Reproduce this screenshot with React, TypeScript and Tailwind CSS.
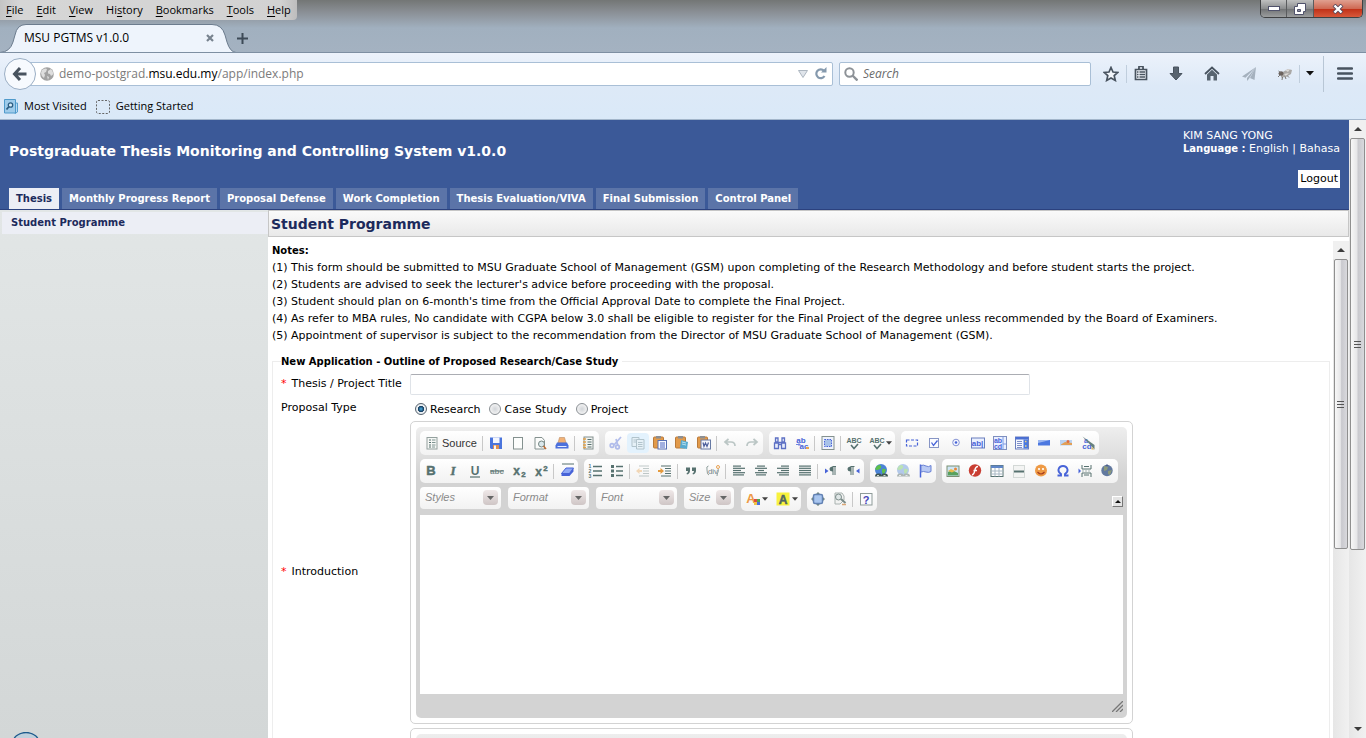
import React from "react";
import type { ReactNode } from "react";

const TEAL = "#56716f";
const BLUE = "#4763d8";

type IconName = string;

const textProps = {
  fontFamily: "Liberation Sans, Arial, sans-serif",
  fontWeight: 700,
  textAnchor: "middle" as const,
};

function bars(rows: [number, number][], color = TEAL) {
  return rows.map(([x, w], i) => (
    <rect key={i} x={x} y={2.5 + i * 2.2} width={w} height="1.2" fill={color} />
  ));
}

function Clipboard({ children }: { children: ReactNode }) {
  return (
    <g>
      <rect x="1.5" y="2" width="10" height="11" rx="1" fill="#e29a4a" stroke="#b97a3a" />
      <rect x="4" y="1" width="5" height="2.5" fill="#8c8f94" />
      {children}
    </g>
  );
}

const globe = (
  <g>
    <circle cx="8" cy="7" r="6" fill="#4b83d6" />
    <path d="M4 3q3-2 4 0t-1 3-3 1-2-1zM9 6q3-1 4 1l-2 4q-2 0-2-2z" fill="#5ec04b" />
    <path d="M2 13.5q0-3 3-3h1.500q2 0 2 2 0-2 2-2H12q3 0 3 3z" fill="#3f5652" />
    <path d="M4 12.500h2M10.500 12.500h2" stroke="#cfd8d6" />
  </g>
);

const icons: Record<IconName, ReactNode> = {
  source: (
    <g>
      <rect x="3" y="2.500" width="10" height="11.500" fill="#f5f7f5" stroke="#93a09e" />
      <path d="M5 5h2M5 7.500h2M5 10h2M5 12h2" stroke={TEAL} />
      <path d="M8 5h3.500M8 7.500h3.500M8 10h3.500M8 12h3" stroke="#7f9492" />
    </g>
  ),
  save: (
    <g>
      <path d="M2 2.500h12V14H3l-1-1z" fill="#4a74dc" />
      <rect x="5" y="2.500" width="6.500" height="5.500" fill="#f3f6ff" />
      <rect x="5" y="10" width="6" height="4" fill="#e0904d" />
      <rect x="6" y="10.500" width="2" height="3.500" fill="#f3f6ff" />
    </g>
  ),
  newpage: <rect x="3.500" y="2.500" width="9" height="11.500" fill="#fcfdfc" stroke="#84918f" />,
  preview: (
    <g>
      <path d="M3 2.500h7l2.500 3V14H3z" fill="#fbfcfb" stroke="#84918f" />
      <circle cx="9.500" cy="9" r="3" fill="#dbe8ec" stroke="#748582" />
      <path d="M11.500 11l2.500 3" stroke="#bf6b32" strokeWidth="1.500" />
    </g>
  ),
  print: (
    <g>
      <path d="M4 8l1.500-5.500h5L12 8z" fill="#f2b276" stroke="#b98b64" strokeWidth=".6" />
      <path d="M3 7.500h10l1.500 3v3h-13v-3z" fill="#4c70dc" />
      <path d="M3.500 11.500h9" stroke="#e6ecff" />
    </g>
  ),
  templates: (
    <g>
      <rect x="4" y="2" width="9" height="12" fill="#f1f3f1" stroke="#84918f" />
      <path d="M3 4h3M3 7h3M3 10h3M3 12.500h3" stroke="#e2a24b" strokeWidth="1.400" />
      <path d="M7.500 4.500h4M7.500 7h4M7.500 9.500h4M7.500 12h4" stroke={TEAL} />
    </g>
  ),
  cut: (
    <g opacity=".4" fill="none" stroke={BLUE} strokeWidth="1.700">
      <path d="M13 2L6 10M8 4l2 7" />
      <circle cx="4" cy="10.500" r="1.800" />
      <circle cx="9.500" cy="12" r="1.800" />
    </g>
  ),
  copy: (
    <g opacity=".5" fill="#e9f1f3" stroke="#83979c">
      <path d="M2 2.500h7v9H2z" />
      <path d="M6.500 4.500h7.500V14H6.500z" />
      <path d="M3.500 5h3M3.500 7h3M8 7.500h4.500M8 9.500h4.500M8 11.500h4.500" />
    </g>
  ),
  paste: (
    <Clipboard>
      <rect x="6" y="5.500" width="8.500" height="8.500" fill="#f7f9ff" stroke="#5871b5" />
      <path d="M8 8h5M8 10h5M8 12h5" stroke="#4c67c0" />
    </Clipboard>
  ),
  pastetext: (
    <Clipboard>
      <path d="M7 5l7 2-1 7-7-1z" fill="#58aad0" />
      <path d="M8 7l4 1M8 9l4 1" stroke="#b7e1ef" />
    </Clipboard>
  ),
  pasteword: (
    <Clipboard>
      <rect x="5" y="5" width="9.500" height="9" fill="#f5f7fc" stroke="#6679a3" />
      <path d="M7 7.500l1 4 1.500-3.500 1.500 3.500 1.500-4" fill="none" stroke="#4c5f9c" strokeWidth="1.200" />
    </Clipboard>
  ),
  undo: <path d="M6.500 4L3 7l3.500 3M3.500 7H9q4 0 4 4" fill="none" stroke="#bbc6c5" strokeWidth="1.700" />,
  redo: <path d="M9.500 4L13 7l-3.500 3M12.500 7H7q-4 0-4 4" fill="none" stroke="#bbc6c5" strokeWidth="1.700" />,
  find: (
    <g fill="#e6ebfa" stroke="#5d70c4" strokeWidth="1.300">
      <path d="M3.500 3H6v4H3.500zM10 3h2.500v4H10zM2.500 8H6.500v5.500H2.500zM9.500 8h4v5.500h-4z" />
      <path d="M6 7.500h4M6.500 9.500h3" />
    </g>
  ),
  replace: (
    <g {...textProps} fontSize="8">
      <text x="7" y="7.500" fill={BLUE}>ab</text>
      <text x="10" y="14" fill={BLUE}>ac</text>
      <path d="M2 9.500h4M4.500 8l1.500 1.500L4.500 11" fill="none" stroke="#7485df" />
      <rect x="12" y="12" width="3" height="2" fill="#e8a54d" />
    </g>
  ),
  selectall: (
    <g>
      <rect x="2" y="1.500" width="12" height="13" fill="#eef2fb" stroke="#84918f" />
      <rect x="4.500" y="4.500" width="7" height="7" fill="#a7c2e8" stroke={BLUE} strokeDasharray="1.500 1" />
    </g>
  ),
  spell: (
    <g>
      <text x="8" y="7.500" fontSize="7" fill={TEAL} {...textProps}>ABC</text>
      <path d="M5 10l3 3.500L12 9" fill="none" stroke={TEAL} strokeWidth="1.600" />
    </g>
  ),
  form: <rect x="2.500" y="5" width="11" height="6" fill="none" stroke={BLUE} strokeWidth="1.200" strokeDasharray="3 1.500" />,
  checkbox: (
    <g fill="none">
      <rect x="3.500" y="3.500" width="9" height="9" fill="#fbfcff" stroke="#8795c5" />
      <path d="M5.500 7.500l2 3 4-5" stroke={BLUE} strokeWidth="1.300" />
    </g>
  ),
  radio: (
    <g>
      <circle cx="8" cy="7.500" r="3.300" fill="#f6f8ff" stroke="#8795d5" />
      <circle cx="8" cy="7.500" r="1.300" fill={BLUE} />
    </g>
  ),
  textfield: (
    <g>
      <rect x="1.500" y="3" width="13" height="10" fill="#eaf0ff" stroke="#6b7fbe" />
      <text x="7.500" y="11" fontSize="8" fill={BLUE} {...textProps}>ab|</text>
    </g>
  ),
  textarea: (
    <g>
      <rect x="1.500" y="1.500" width="13" height="13" fill="#eaf0ff" stroke="#7e8fc0" />
      <g fontSize="7" fill={BLUE} {...textProps}>
        <text x="6" y="7.500">ab</text>
        <text x="6" y="13.500">cd</text>
      </g>
      <path d="M11 2v12M11 9h3" stroke="#7e9ae6" />
    </g>
  ),
  select: (
    <g>
      <rect x="1.500" y="2" width="13" height="12" fill="#f4f7ff" stroke="#6b7fbe" />
      <rect x="1.500" y="2" width="13" height="2.500" fill="#4b6fd2" />
      <path d="M3 6.500h5M3 8.500h5M3 10.500h5M3 12.500h5" stroke="#7e8ec6" />
      <rect x="9.500" y="4.500" width="4.500" height="9" fill="#4b79df" />
      <path d="M11 6.500h1.500M11 11h1.500" stroke="#f1d27d" strokeWidth="1.500" />
    </g>
  ),
  button: (
    <g>
      <rect x="2" y="5" width="12" height="5.500" fill="#4c78e0" />
      <path d="M2 5h12L2 8z" fill="#9db8f1" />
    </g>
  ),
  imagebutton: (
    <g>
      <rect x="2" y="5" width="12" height="5.500" fill="#bcd3f1" />
      <path d="M3 9.500l4-2.500 7 1v2H3z" fill="#e29f55" />
      <circle cx="10" cy="6.500" r="1.500" fill="#df6d3e" />
    </g>
  ),
  hidden: (
    <g>
      <text x="7" y="14" fontSize="8" fill={BLUE} {...textProps}>cd</text>
      <text x="6" y="7.500" fontSize="7" fill={BLUE} {...textProps}>a</text>
      <path d="M2.500 1.500L14.500 14.500V10z" fill="#66807e" />
      <path d="M11.500 11.500v3h3z" fill="#d8b065" />
    </g>
  ),
  bold: <text x="8" y="12" fontSize="13" fill={TEAL} stroke={TEAL} strokeWidth=".5" {...textProps}>B</text>,
  italic: (
    <text x="8" y="12" fontSize="13" fontStyle="italic" fill={TEAL} stroke={TEAL} strokeWidth=".4" {...textProps} fontFamily="Liberation Serif, serif">I</text>
  ),
  underline: (
    <g>
      <text x="8" y="11.500" fontSize="12" fill={TEAL} {...textProps}>U</text>
      <path d="M3 14h10" stroke={TEAL} strokeWidth="1.200" />
    </g>
  ),
  strike: (
    <g>
      <text x="8" y="10.500" fontSize="8" fill="#7b8e8c" {...textProps}>abc</text>
      <path d="M1 8h14" stroke={TEAL} />
    </g>
  ),
  sub: (
    <g fill={TEAL} stroke={TEAL} strokeWidth=".4" {...textProps}>
      <text x="5.500" y="11.500" fontSize="12">x</text>
      <text x="12.500" y="14" fontSize="8">2</text>
    </g>
  ),
  sup: (
    <g fill={TEAL} stroke={TEAL} strokeWidth=".4" {...textProps}>
      <text x="5.500" y="12.500" fontSize="12">x</text>
      <text x="12.500" y="8" fontSize="8">2</text>
    </g>
  ),
  eraser: (
    <g>
      <path d="M3 1h12" stroke={TEAL} />
      <path d="M7 5h7.500l-4 5.500H2.500z" fill="#8fa9f5" stroke={BLUE} />
      <path d="M2.500 10h8l4-5v3.500L10.500 13h-8z" fill={BLUE} />
    </g>
  ),
  ol: (
    <g>
      <g fontSize="5" fill={TEAL} {...textProps}>
        <text x="3" y="5">1</text>
        <text x="3" y="10">2</text>
        <text x="3" y="15">3</text>
      </g>
      <path d="M6 3.500h9M6 8h9M6 12.500h9" stroke={TEAL} strokeWidth="1.300" />
    </g>
  ),
  ul: (
    <g>
      <path d="M2 3.500h3M2 8h3M2 12.500h3" stroke={TEAL} strokeWidth="3" />
      <path d="M7 3.500h7M7 8h7M7 12.500h7" stroke={TEAL} strokeWidth="1.300" />
    </g>
  ),
  outdent: (
    <g opacity=".35">
      <path d="M4 3h10M8 5.500h6M8 8h6M8 10.500h6M4 13h10" stroke={TEAL} />
      <path d="M1 8l3.500-3v2H7v2H4.500v2z" fill="#e59a3c" />
    </g>
  ),
  indent: (
    <g>
      <path d="M4 3h10M8 5.500h6M8 8h6M8 10.500h6M4 13h10" stroke={TEAL} />
      <path d="M7 8L3.500 5v2H1v2h2.500v2z" fill="#e59a3c" />
    </g>
  ),
  quote: (
    <path d="M3 4.500h4v3q0 3-3 4l-.5-1Q5 9.500 5 8H3zM9 4.500h4v3q0 3-3 4l-.5-1Q11 9.500 11 8H9z" fill={TEAL} />
  ),
  div: (
    <g>
      <text x="8" y="11" fontSize="8" fill="#72858a" {...textProps} fontWeight={400}>div</text>
      <path d="M3.500 3Q1 3 2 7q0 5 2 5M13 6q1 1 0 3t-1 4" fill="none" stroke="#8f9f9d" />
      <circle cx="13" cy="4" r="1.500" fill="none" stroke="#eaa251" />
    </g>
  ),
  left: <g>{bars([[2, 8], [2, 12], [2, 8], [2, 12], [2, 11]])}</g>,
  center: <g>{bars([[4, 8], [2, 12], [5, 6], [2, 12], [3, 10]])}</g>,
  right: <g>{bars([[6, 8], [2, 12], [6, 8], [2, 12], [4, 10]])}</g>,
  justify: <g>{bars([[2, 12], [2, 12], [2, 12], [2, 12], [2, 12]])}</g>,
  ltr: (
    <g>
      <path d="M2 5.500v5l3.500-2.500z" fill={BLUE} />
      <path d="M9.500 3.500H13M10 4v8M12 4v8" fill="none" stroke={TEAL} />
      <path d="M10 3.500q-3.500 0-3.500 2.500T10 8.500z" fill={TEAL} />
    </g>
  ),
  rtl: (
    <g>
      <path d="M14.500 5.500v5L11 8z" fill={BLUE} />
      <path d="M5.500 3.500H9.500M6 4v8M8 4v8" fill="none" stroke={TEAL} />
      <path d="M6 3.500Q2.500 3.500 2.500 6T6 8.500z" fill={TEAL} />
    </g>
  ),
  link: globe,
  unlink: <g opacity=".4">{globe}</g>,
  anchor: (
    <g>
      <path d="M3.500 1.500v13" stroke={BLUE} strokeWidth="1.500" />
      <path d="M4 2.500q2.500-1 5 .5t5-.5v6q-2.500 1.500-5 .5t-5 0z" fill="#b8c9f3" stroke="#6a82d5" />
    </g>
  ),
  image: (
    <g>
      <rect x="2" y="3" width="12" height="10.500" fill="#cfe6f6" stroke="#7b8f72" />
      <path d="M3 12.500V9l4-2 6 3v2.500z" fill="#58a15e" />
      <path d="M3 8l3-2 4 2-3 1.500z" fill="#ecbc4c" />
      <circle cx="10.500" cy="6" r="1.500" fill="#e78739" />
    </g>
  ),
  flash: (
    <g>
      <circle cx="8" cy="7.500" r="6.200" fill="#c93e32" />
      <path d="M11 3.500q-2.500 0-3.200 4T5 12M6.500 7.500h3.500" fill="none" stroke="#fff" strokeWidth="1.400" />
    </g>
  ),
  table: (
    <g>
      <rect x="2" y="2.500" width="12" height="11" fill="#fff" stroke={TEAL} />
      <rect x="2" y="2.500" width="12" height="2.500" fill="#5f86c8" />
      <path d="M6 5v8.500M10 5v8.500M2 8h12M2 11h12" stroke="#a9b8c4" />
    </g>
  ),
  rule: (
    <g>
      <rect x="2.500" y="2.500" width="11" height="12" fill="#f3f4f3" stroke="#d3d8d6" />
      <path d="M3 8.500h10" stroke={TEAL} strokeWidth="2" />
    </g>
  ),
  smiley: (
    <g>
      <circle cx="8" cy="7.500" r="6" fill="#ee9a45" />
      <path d="M4.500 9q3.500 4 7 0" fill="none" stroke="#a83f20" strokeWidth="1.200" />
      <circle cx="6" cy="6" r="1.100" fill="#fff" />
      <circle cx="10" cy="6" r="1.100" fill="#fff" />
    </g>
  ),
  omega: (
    <path d="M2.500 12.500h3.500v-1.500Q3 9 3.500 6.500 4.500 3 8 3t4.500 3.500Q13 9 10 11v1.500h3.500" fill="none" stroke={BLUE} strokeWidth="1.900" />
  ),
  pagebreak: (
    <g fill="none">
      <path d="M5 2v4h9V2M5 14v-4h9v4M7 3.500h5M7 12h5" stroke={TEAL} />
      <path d="M5 8h9" stroke="#a7b5b3" strokeDasharray="2 1" />
      <path d="M1.500 5.500L4 8l-2.500 2.500z" fill={BLUE} />
    </g>
  ),
  iframe: (
    <g>
      <circle cx="8" cy="7.500" r="5.700" fill="#62799f" />
      <path d="M5 3l4 1-1 3-3 1zM9 8l4-1-2 5-2-1z" fill="#8d9a7a" />
      <path d="M8 1l1.500 2h-3z" fill="#4d5f8d" />
    </g>
  ),
  textcolor: (
    <g>
      <text x="6" y="12" fontSize="13" fill="#ee9a45" {...textProps}>A</text>
      <rect x="9" y="8" width="3" height="3" fill="#df4b3f" />
      <rect x="12" y="8" width="3" height="3" fill="#57a84f" />
      <rect x="9" y="11" width="3" height="3" fill="#f0c345" />
      <rect x="12" y="11" width="3" height="3" fill="#4b6fdc" />
    </g>
  ),
  bgcolor: (
    <g>
      <rect x="1.500" y="1.500" width="13" height="13" fill="#f8f23e" />
      <text x="8" y="12.500" fontSize="12" fill="#4f6664" stroke="#4f6664" strokeWidth=".5" {...textProps}>A</text>
    </g>
  ),
  maximize: (
    <g>
      <path d="M8 1l2.500 2.500h-5zM8 15l2.500-2.500h-5zM1 8l2.500-2.500v5zM15 8l-2.500-2.500v5z" fill="#6f8583" />
      <rect x="3.500" y="3.500" width="9" height="9" rx="1.500" fill="#a9c6ef" stroke="#6382b4" strokeWidth="1.500" />
    </g>
  ),
  blocks: (
    <g>
      <path d="M3 2h7l2 3v4l-4 4H3z" fill="#f1f2f1" stroke="#a9b2b0" />
      <circle cx="6.500" cy="6" r="3" fill="#dfe6e6" stroke="#7b8c8a" />
      <path d="M9 8l4.500 4" stroke="#7b8c8a" strokeWidth="2" />
      <path d="M10 13.500h4" stroke="#dba878" strokeWidth="1.500" />
    </g>
  ),
  about: (
    <g>
      <rect x="2.500" y="2.500" width="11.500" height="11.500" fill="#fafbfd" stroke="#8f9b99" />
      <text x="8.200" y="12.500" fontSize="11" fill="#4646b8" {...textProps}>?</text>
    </g>
  ),
};

function Tool({ name, arrow, active }: { name: IconName; arrow?: boolean; active?: boolean }) {
  return (
    <button
      type="button"
      aria-label={name}
      className={`flex h-5 items-center justify-center rounded-sm ${arrow ? "w-[30px]" : "w-[22px]"} ${active ? "bg-[#e3f2fd]" : ""}`}
    >
      <svg viewBox="0 0 16 16" className="size-4 shrink-0">{icons[name]}</svg>
      {arrow && (
        <svg viewBox="0 0 7 4" className="ml-px h-1 w-[6px]"><path d="M0 0h7L3.500 4z" fill="#444" /></svg>
      )}
    </button>
  );
}

function Group({ items }: { items: string[] }) {
  return (
    <div className="flex h-6 items-center rounded-[5px] bg-gradient-to-b from-white to-[#f2f2f2]">
      {items.map((it, i) => {
        if (it === "|") return <span key={i} className="mr-[2px] ml-px h-[15px] w-px bg-[#c8c8c8]" />;
        if (it === "source")
          return (
            <button key={i} type="button" className="flex h-5 w-[61px] items-center gap-[2px] pl-1 font-['Liberation_Sans',Arial,sans-serif] text-[11px] text-[#333]">
              <svg viewBox="0 0 16 16" className="size-4 shrink-0">{icons.source}</svg>
              Source
            </button>
          );
        const arrow = it.endsWith("+");
        return <Tool key={i} name={arrow ? it.slice(0, -1) : it} arrow={arrow} active={it === "copy"} />;
      })}
    </div>
  );
}

function Combo({ label, small }: { label: string; small?: boolean }) {
  return (
    <button
      type="button"
      className={`mr-px flex h-[22px] items-center justify-between rounded-[4px] bg-gradient-to-b from-white to-[#f2f2f2] pr-[3px] pb-px pl-[5px] font-['Liberation_Sans',Arial,sans-serif] text-[11px] text-[#8a8a8a] italic ${small ? "w-[50px]" : "w-[81px]"}`}
    >
      {label}
      <span className="flex size-[15px] items-center justify-center rounded-sm bg-gradient-to-b from-[#efe8e8] to-[#cfc6c6]">
        <svg viewBox="0 0 7 4" className="h-1 w-[7px]"><path d="M0 0h7L3.500 4z" fill="#666" /></svg>
      </span>
    </button>
  );
}

const row1 = [
  ["source", "|", "save", "newpage", "preview", "print", "|", "templates"],
  ["cut", "copy", "paste", "pastetext", "pasteword", "|", "undo", "redo"],
  ["find", "replace", "|", "selectall", "|", "spell", "spell+"],
  ["form", "checkbox", "radio", "textfield", "textarea", "select", "button", "imagebutton", "hidden"],
];
const row2 = [
  ["bold", "italic", "underline", "strike", "sub", "sup", "|", "eraser"],
  ["ol", "ul", "|", "outdent", "indent", "|", "quote", "div", "|", "left", "center", "right", "justify", "|", "ltr", "rtl"],
  ["link", "unlink", "anchor"],
  ["image", "flash", "table", "rule", "smiley", "omega", "pagebreak", "iframe"],
];

function Editor({ id }: { id: string }) {
  return (
    <div className="w-[723px] rounded-[5px] border border-[#d3d3d3] bg-white p-[5px]">
      <div className="rounded-[5px] bg-[linear-gradient(#eeeeee,#d3d3d3_50px)] px-1 pt-1">
        <div className="flex flex-col gap-1">
          <div className="flex gap-[6px]">{row1.map((g, i) => <Group key={i} items={g} />)}</div>
          <div className="flex gap-[6px]">{row2.map((g, i) => <Group key={i} items={g} />)}</div>
          <div className="flex gap-[6px]">
            <Combo label="Styles" />
            <Combo label="Format" />
            <Combo label="Font" />
            <Combo label="Size" small />
            <Group items={["textcolor+", "bgcolor+"]} />
            <Group items={["maximize", "blocks", "|", "about"]} />
            <button type="button" aria-label="Collapse toolbar" className="mb-1 ml-auto flex size-[11px] items-center justify-center self-end border border-white border-r-[#777] border-b-[#777] bg-[#e4e4e4]">
              <svg viewBox="0 0 6 3" className="h-[3px] w-[6px]"><path d="M0 3h6L3 0z" fill="#111" /></svg>
            </button>
          </div>
        </div>
        <textarea id={id} className="mt-1 block h-[179px] w-full resize-none bg-white p-2 outline-none" />
        <div className="flex h-6 items-center justify-end">
          <svg viewBox="0 0 11 11" className="size-[11px]">
            <path d="M0 11L11 0M4 11l7-7M8 11l3-3" stroke="#777" strokeWidth="1.300" />
          </svg>
        </div>
      </div>
    </div>
  );
}

function ScrollBar({ thumb, side, endArrow }: { thumb: string; side: string; endArrow?: boolean }) {
  return (
    <div aria-hidden="true" className={`flex shrink-0 flex-col bg-gradient-to-r from-[#e6e6e6] to-[#f1f1f1] ${side}`}>
      <div className="flex h-[18px] shrink-0 items-center justify-center bg-[#f0f0f0]">
        <svg viewBox="0 0 8 4" className="h-1 w-2"><path d="M0 4h8L4 0z" fill="#3c3c3c" /></svg>
      </div>
      <div className={`mr-px ml-px flex shrink-0 items-center justify-center rounded-[2px] border border-[#8f8f8f] bg-[linear-gradient(90deg,#f7f7f7,#e6e6e8_45%,#c9c9ce_55%,#d9d9dd)] ${thumb}`}>
        <svg viewBox="0 0 8 9" className="h-[9px] w-2">
          <path d="M0 1.500h7M0 4.500h7M0 7.500h7" stroke="#555" strokeWidth="1.200" />
        </svg>
      </div>
      {endArrow && (
        <div className="mt-auto flex h-[18px] shrink-0 items-center justify-center">
          <svg viewBox="0 0 8 4" className="h-1 w-2"><path d="M0 0h8L4 4z" fill="#3c3c3c" /></svg>
        </div>
      )}
    </div>
  );
}

const menus: [string, string, string][] = [
  ["", "F", "ile"], ["", "E", "dit"], ["", "V", "iew"], ["Hi", "s", "tory"], ["", "B", "ookmarks"], ["", "T", "ools"], ["", "H", "elp"],
];

function BrowserChrome() {
  return (
    <header className="shrink-0 font-['Open_Sans','Noto_Sans',sans-serif] text-xs text-black">
      <div className="flex h-[52px] flex-col bg-[linear-gradient(#737675,#8a8f95_12px,#a1b0bf_28px,#a4b2c1)]">
        <div className="flex h-5 items-start justify-between">
          <nav className="flex h-5 items-center gap-[13px] rounded-br bg-[linear-gradient(90deg,#c4c4c4,#d6d6d6_20px,#d2d2d2_280px,#bdbdbd)] pr-[6px] pl-[6px] text-[11px]">
            {menus.map(([a, b, c]) => (
              <button key={b + c} type="button">{a}<span className="underline underline-offset-2">{b}</span>{c}</button>
            ))}
          </nav>
          <div className="mr-[3px] flex h-[18px] overflow-hidden rounded-b-[5px] border border-t-0 border-[#3f4143]">
            <button type="button" aria-label="Minimize" className="flex w-[26px] items-center justify-center border-r border-[#5a5c5e] bg-[linear-gradient(#bfc0c0,#8c8e8f_50%,#6f7173_51%,#9b9d9e)]">
              <svg viewBox="0 0 12 6" className="h-[6px] w-3"><rect x=".5" y=".5" width="11" height="4" fill="#fff" stroke="#50526b" /></svg>
            </button>
            <button type="button" aria-label="Restore" className="flex w-[27px] items-center justify-center border-r border-[#5a5c5e] bg-[linear-gradient(#bfc0c0,#8c8e8f_50%,#6f7173_51%,#9b9d9e)]">
              <svg viewBox="0 0 12 12" className="size-3">
                <path d="M3.500.5h8v8h-2v3h-9v-8h3z" fill="#fff" stroke="#50526b" />
                <path d="M3.500 6.500h3v2h-3z" fill="#8b8da0" stroke="#50526b" />
              </svg>
            </button>
            <button type="button" aria-label="Close window" className="flex w-12 items-center justify-center bg-[linear-gradient(#e0a090,#cf6a54_50%,#bf2f16_51%,#d8583a)]">
              <svg viewBox="0 0 12 10" className="h-[10px] w-3">
                <path d="M2 1l8 8M10 1L2 9" stroke="#59485a" strokeWidth="4" />
                <path d="M2.500 1.500l7 7M9.500 1.500l-7 7" stroke="#fff" strokeWidth="2.400" />
              </svg>
            </button>
          </div>
        </div>
        <div className="mt-1 flex h-7 items-stretch">
          <div className="relative flex w-[236px] items-center pr-[22px] pl-6">
            <svg viewBox="0 0 236 28" className="absolute inset-0 h-7 w-full" aria-hidden="true">
              <path d="M0 28.500Q10 28 13 18L15 11Q17 .5 26 .5H212Q222 .5 225 11L227 18Q230 28 236 28.500z" fill="#eef4fc" stroke="#6c7c8e" />
            </svg>
            <span className="relative grow">MSU PGTMS v1.0.0</span>
            <button type="button" aria-label="Close tab" className="relative">
              <svg viewBox="0 0 8 8" className="size-2"><path d="M1 1l6 6M7 1L1 7" stroke="#77838f" strokeWidth="2.200" /></svg>
            </button>
          </div>
          <button type="button" aria-label="New tab" className="ml-px flex items-center">
            <svg viewBox="0 0 11 11" className="size-[11px]"><path d="M5.500 0v11M0 5.500h11" stroke="#3d4a57" strokeWidth="2" /></svg>
          </button>
        </div>
      </div>

      <div className="flex h-[68px] flex-col border-t border-b border-t-[#7e8fa2] border-b-[#a3b6cb] bg-gradient-to-b from-[#ecf2fb] via-[#dde9f7] via-50% to-[#dae9f8]">
        <div className="flex h-[41px] items-center">
          <button type="button" aria-label="Back" className="relative z-10 ml-1 flex size-8 shrink-0 items-center justify-center rounded-full border border-[#9aaec4] bg-[#f7fafe]">
            <svg viewBox="0 0 16 16" className="size-4"><path d="M8 2L2.500 8 8 14M3 8h11.500" fill="none" stroke="#48535f" strokeWidth="3" /></svg>
          </button>
          <div className="-ml-2 flex h-6 grow items-center rounded-r-[2px] border border-[#a9bfd6] bg-white pr-[5px] pl-[11px]">
            <svg viewBox="0 0 14 14" className="size-[14px]">
              <circle cx="7" cy="7" r="6.800" fill="#a2a2a2" />
              <path d="M2 3q3-2.500 5-1l-1 3-2 1 1 2-1 3Q1 9 1 6zM8 4l3-2q2 2 2.500 5L11 9l-1-2-2-.5zM7 9l2 1-1 3z" fill="#dedede" />
            </svg>
            <div role="textbox" aria-label="Address" className="ml-[5px] grow text-[#7b7b7b]">demo-postgrad.<span className="text-black">msu.edu.my</span>/app/index.php</div>
            <button type="button" aria-label="History list" className="mr-[6px]">
              <svg viewBox="0 0 10 8" className="h-2 w-[10px]"><path d="M.5.500h9L5 7.500z" fill="#dfe4ea" stroke="#adb6c0" /></svg>
            </button>
            <button type="button" aria-label="Reload">
              <svg viewBox="0 0 13 13" className="size-[13px]">
                <path d="M10 3.800A4.400 4.400 0 1 0 10.500 9" fill="none" stroke="#8599ad" strokeWidth="2.200" />
                <path d="M7 5.500h5.500V0z" fill="#8599ad" />
              </svg>
            </button>
          </div>
          <div className="ml-[6px] flex h-6 w-[252px] shrink-0 items-center rounded-[2px] border border-[#a9bfd6] bg-white pl-1">
            <svg viewBox="0 0 14 14" className="size-[14px]">
              <circle cx="5.500" cy="5.500" r="4.200" fill="none" stroke="#8d9297" strokeWidth="2" />
              <path d="M8.500 8.500l5 5" stroke="#8d9297" strokeWidth="2.400" />
            </svg>
            <input aria-label="Search" placeholder="Search" className="ml-[5px] w-40 bg-transparent italic outline-none placeholder:text-[#6b6b6b]" />
          </div>
          <div className="ml-[5px] flex shrink-0 items-center">
            <button type="button" aria-label="Bookmark" className="flex w-[30px] justify-center">
              <svg viewBox="0 0 16 16" className="size-4"><path d="M8 1.500l2 4.500 4.800.4-3.600 3.200 1.100 4.800L8 11.900l-4.300 2.500 1.100-4.800L1.200 6.400 6 6z" fill="#f2f6fb" stroke="#48535f" strokeWidth="1.700" /></svg>
            </button>
            <span className="h-[18px] w-px bg-[#c0cedd]" />
            <button type="button" aria-label="Bookmarks list" className="flex w-7 justify-center">
              <svg viewBox="0 0 14 15" className="h-[15px] w-[14px]">
                <path d="M4 2.500h1V.5h4v2h1M1.500 3.500h11v10h-11z" fill="#f0f5fb" stroke="#48535f" strokeWidth="1.700" />
                <path d="M3 6h1.500M3 8.500h1.500M3 11h1.500M5.500 6H11M5.500 8.500H11M5.500 11H11" stroke="#48535f" strokeWidth="1.300" />
              </svg>
            </button>
            <button type="button" aria-label="Downloads" className="flex w-[42px] justify-center">
              <svg viewBox="0 0 14 15" className="h-[15px] w-[14px]"><path d="M4.500 1h5v6.500H13L7 14 1 7.500h3.500z" fill="#586470" stroke="#48535f" /></svg>
            </button>
            <button type="button" aria-label="Home" className="flex w-[30px] justify-center">
              <svg viewBox="0 0 16 15" className="h-[15px] w-4">
                <path d="M1 8l7-6.500L15 8" fill="none" stroke="#48535f" strokeWidth="1.800" />
                <path d="M3 8.500l5-4.700 5 4.700v6H9.500V10h-3v4.500H3z" fill="#586470" />
              </svg>
            </button>
            <button type="button" aria-label="Send" className="flex w-11 justify-center">
              <svg viewBox="0 0 16 16" className="size-4"><path d="M15 1L1 10.500l3.500 1.200zM15 1L6 12v3l2-2.300zM15 1l-1.500 13L9 12z" fill="#a5b1be" /></svg>
            </button>
            <button type="button" aria-label="Extension" className="flex w-7 justify-center">
              <svg viewBox="0 0 16 14" className="h-[14px] w-4">
                <path d="M4 6l7-4 4 1-1 4-5 3-5 .5z" fill="#aaa8a6" />
                <ellipse cx="4" cy="6.500" rx="2.500" ry="2.300" fill="#6b625e" />
                <path d="M8 3l5-1-2 3zM7 7l5-1-3 3z" fill="#dedbd8" />
                <path d="M1 10l2-2M5 13l.5-3M9 12L8 9.500M12 10.500l-2-2M1.500 4l2 1.500" stroke="#7a7876" />
              </svg>
            </button>
            <span className="h-[18px] w-px bg-[#c0cedd]" />
            <button type="button" aria-label="More" className="flex w-5 justify-center">
              <svg viewBox="0 0 8 5" className="h-[5px] w-2"><path d="M0 0h8L4 4.500z" fill="#111" /></svg>
            </button>
            <span className="ml-[3px] h-9 w-px bg-[#b8c6d5]" />
            <button type="button" aria-label="Open menu" className="flex w-[42px] justify-center">
              <svg viewBox="0 0 16 13" className="h-[13px] w-4"><path d="M1 1.500h14M1 6.500h14M1 11.500h14" stroke="#48535f" strokeWidth="2.400" strokeLinecap="round" /></svg>
            </button>
          </div>
        </div>
        <div className="flex h-[25px] items-center pl-1 text-[11px]">
          <svg viewBox="0 0 14 15" className="h-[15px] w-[14px]">
            <path d="M10 4h3.500v9L11 14.500z" fill="#b9daf2" stroke="#5aa0ce" />
            <path d="M.5.500h11v13.500H.5z" fill="#9ecbea" stroke="#4f9acb" />
            <circle cx="6.500" cy="6" r="2.200" fill="#d9edf9" stroke="#2c5d82" strokeWidth="1.300" />
            <path d="M5 7.500L2.500 10.500" stroke="#2c5d82" strokeWidth="1.800" />
          </svg>
          <a href="#most" className="ml-[6px]">Most Visited</a>
          <svg viewBox="0 0 14 14" className="ml-[9px] size-[14px]"><rect x=".5" y=".5" width="13" height="13" rx="1.500" fill="none" stroke="#666" strokeDasharray="2 1.500" /></svg>
          <a href="#start" className="ml-[6px]">Getting Started</a>
        </div>
      </div>
    </header>
  );
}

const tabs = ["Thesis", "Monthly Progress Report", "Proposal Defense", "Work Completion", "Thesis Evaluation/VIVA", "Final Submission", "Control Panel"];

const notes = [
  "(1) This form should be submitted to MSU Graduate School of Management (GSM) upon completing of the Research Methodology and before student starts the project.",
  "(2) Students are advised to seek the lecturer's advice before proceeding with the proposal.",
  "(3) Student should plan on 6-month's time from the Official Approval Date to complete the Final Project.",
  "(4) As refer to MBA rules, No candidate with CGPA below 3.0 shall be eligible to register for the Final Project of the degree unless recommended by the Board of Examiners.",
  "(5) Appointment of supervisor is subject to the recommendation from the Director of MSU Graduate School of Management (GSM).",
];

function SiteHeader() {
  return (
    <div className="flex h-[90px] shrink-0 items-stretch justify-between border-b border-[#2b417e] bg-[#3b5998] pr-[9px] pl-[9px] text-white">
      <div className="flex flex-col justify-between">
        <h1 className="mt-[21px] text-sm leading-5 font-bold">Postgraduate Thesis Monitoring and Controlling System v1.0.0</h1>
        <nav className="flex gap-[3px]">
          {tabs.map((t, i) => (
            <a key={t} href="#tab" className={`h-[21px] px-[7px] pt-[3px] text-[10px] leading-4 font-bold ${i === 0 ? "bg-[#eceef5] text-[#1c2a5c]" : "bg-[#5b74a8]"}`}>{t}</a>
          ))}
        </nav>
      </div>
      <div className="mt-[9px] flex flex-col">
        <span className="leading-[13px]">KIM SANG YONG</span>
        <span className="leading-[13px]"><b className="text-[10px]">Language :</b> <a href="#en">English</a> | <a href="#ms">Bahasa</a></span>
        <button type="button" className="mt-[15px] h-[18px] self-end bg-white px-[2px] leading-[18px] text-black">Logout</button>
      </div>
    </div>
  );
}

function Radio({ label, checked }: { label: string; checked?: boolean }) {
  return (
    <label className="flex items-center gap-[3px]">
      <input
        type="radio"
        name="proposal"
        defaultChecked={checked}
        className="mb-[3px] size-3 appearance-none rounded-full border border-[#8a8f94] bg-[radial-gradient(circle,#d2d5d9,#f6f6f6_80%)] checked:border-[#55616c] checked:bg-[radial-gradient(circle,#4fb4e8,#12395c_40%,#e9eef2_50%)]"
      />
      <span className="leading-4">{label}</span>
    </label>
  );
}

function Required({ children }: { children: ReactNode }) {
  return (
    <span className="flex gap-[5px] whitespace-nowrap">
      <span className="text-[#ff0000]">*</span>
      {children}
    </span>
  );
}

export default function App() {
  return (
    <div className="flex h-screen flex-col overflow-hidden bg-white">
      <BrowserChrome />
      <div className="flex min-h-0 grow font-[Verdana,'DejaVu_Sans',sans-serif] text-[11px] text-black">
        <div className="flex min-w-0 grow flex-col">
          <SiteHeader />
          <div className="flex min-h-0 grow">
            <aside className="relative w-[268px] shrink-0 bg-gradient-to-b from-[#e2e6e6] to-[#d3d7d7] pt-[2px] pl-[2px]">
              <a href="#programme" className="block h-[22px] bg-[#eceef5] pl-[9px] text-[10px] leading-[22px] font-bold text-[#1c2a5c]">Student Programme</a>
              <svg viewBox="0 0 28 14" className="absolute -bottom-2 left-3 h-[14px] w-7" aria-hidden="true">
                <ellipse cx="14" cy="12" rx="13.500" ry="11.500" fill="#bfd0dc" stroke="#1d5a8c" strokeWidth="1.300" />
              </svg>
            </aside>
            <main className="flex min-w-0 grow flex-col">
              <h2 className="h-[27px] shrink-0 border border-[#c6c6c6] bg-gradient-to-b from-[#fafafa] to-[#e9e9e9] pl-[2px] text-sm leading-[26px] font-bold text-[#1c2a5c]">Student Programme</h2>
              <div className="mt-1 flex min-h-0 grow">
                <div className="min-w-0 grow overflow-hidden pt-[2px] pr-[3px] pl-1">
                  <h3 className="text-[10px] leading-4 font-bold">Notes:</h3>
                  {notes.map((n) => <p key={n} className="leading-[17px] whitespace-nowrap">{n}</p>)}
                  <form>
                    <fieldset className="mt-[9px] min-w-0 border border-[#ededed] px-2">
                      <legend className="pr-1 text-[10px] leading-[17px] font-bold">New Application - Outline of Proposed Research/Case Study</legend>
                      <div className="grid grid-cols-[129px_1fr] items-center pt-[4px]">
                        <label htmlFor="title"><Required>Thesis / Project Title</Required></label>
                        <input id="title" type="text" className="h-[21px] w-[620px] rounded-[2px] border border-[#dfe3e8] border-t-[#abadb3] bg-white px-1" />
                        <span className="leading-[26px]">Proposal Type</span>
                        <div className="flex h-[26px] items-center gap-[9px] pt-[4px] pl-[5px]">
                          <Radio label="Research" checked />
                          <Radio label="Case Study" />
                          <Radio label="Project" />
                        </div>
                        <label htmlFor="intro"><Required>Introduction</Required></label>
                        <Editor id="intro" />
                        <label htmlFor="statement" className="mt-[4px]"><Required>Problem Statement</Required></label>
                        <div className="mt-[4px]"><Editor id="statement" /></div>
                      </div>
                    </fieldset>
                  </form>
                </div>
                <ScrollBar side="w-4" thumb="h-[290px]" />
              </div>
            </main>
          </div>
        </div>
        <ScrollBar side="w-[17px]" thumb="h-[412px]" endArrow />
      </div>
    </div>
  );
}
